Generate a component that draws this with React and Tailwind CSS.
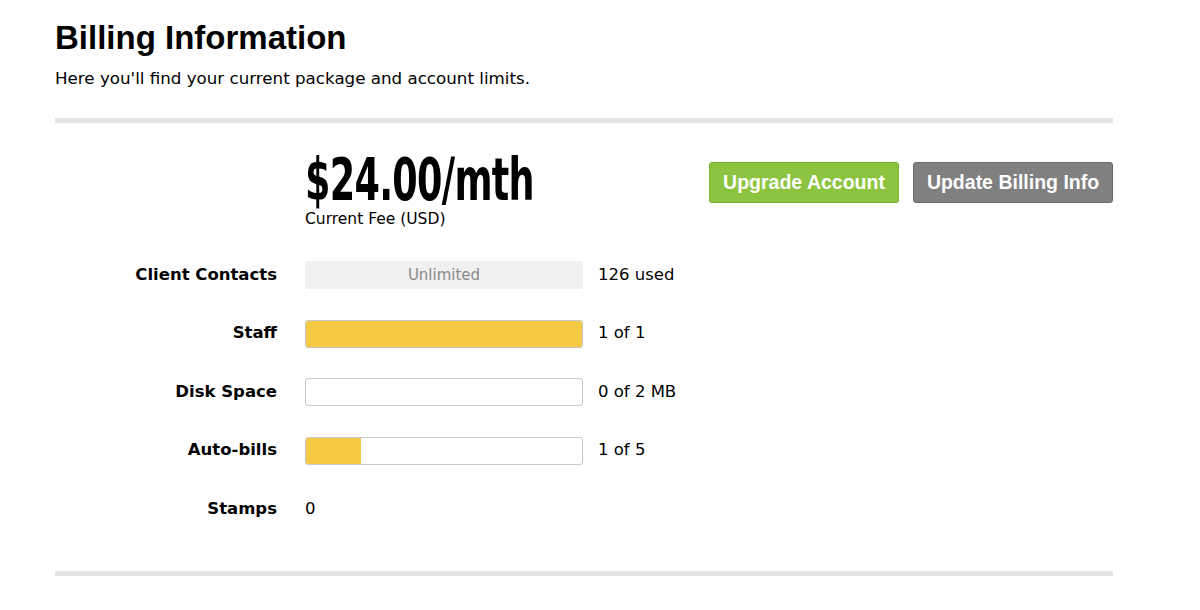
import React from 'react';

const verdana = { fontFamily: '"DejaVu Sans", Verdana, sans-serif' };

const limits = [
    { label: 'Client Contacts', kind: 'unlimited', value: '126 used' },
    { label: 'Staff', kind: 'bar', used: 1, max: 1, value: '1 of 1' },
    { label: 'Disk Space', kind: 'bar', used: 0, max: 2, value: '0 of 2 MB' },
    { label: 'Auto-bills', kind: 'bar', used: 1, max: 5, value: '1 of 5' },
    { label: 'Stamps', kind: 'plain', value: '0' },
];

const LimitBar = ({ item }) => {
    if (item.kind === 'unlimited') {
        return (
            <div className="w-[278px] h-[28px] rounded-[3px] bg-[#f0f0f0] flex items-center justify-center text-[15px] text-[#8a8a8a]">
                Unlimited
            </div>
        );
    }
    const pct = (item.used / item.max) * 100;
    return (
        <div className="w-[278px] h-[28px] rounded-[3px] border border-[#c8c8c8] bg-white overflow-hidden">
            <div className="h-full bg-[#f6c944]" style={{ width: `${pct}%` }} />
        </div>
    );
};

export default function App() {
    return (
        <div className="bg-white min-h-[610px] text-black" style={verdana}>
            <div className="ml-[55px] w-[1058px] pt-[17px]">
                <h1 className="text-[33px] font-bold leading-[42px]" style={{ fontFamily: '"Liberation Sans", Arial, sans-serif' }}>
                    Billing Information
                </h1>
                <p className="text-[16.7px] mt-[7px] leading-[24px]">Here you'll find your current package and account limits.</p>
                <div className="h-[5px] bg-[#e4e4e4] mt-[28px]" />

                <div className="flex items-start mt-[29px]">
                    <div className="w-[250px] shrink-0" />
                    <div className="flex-1 flex justify-between">
                        <div>
                            <div className="h-[58px] w-[230px] pt-[3px]">
                                <div
                                    className="inline-block align-top text-[58px] leading-[50px] font-bold tracking-[-1px] scale-x-[0.7] origin-left whitespace-nowrap"
                                    style={{ fontFamily: '"DejaVu Sans Condensed", "DejaVu Sans", sans-serif' }}
                                >
                                    $24.00/mth
                                </div>
                            </div>
                            <div className="text-[15.5px] leading-[18px]">Current Fee (USD)</div>
                        </div>
                        <div className="flex gap-[14px] mt-[10px]" style={{ fontFamily: '"Liberation Sans", Arial, sans-serif' }}>
                            <button className="h-[41px] w-[190px] rounded-[3px] bg-[#8cc43f] border border-[#79ad33] text-white font-bold text-[19.5px]">
                                Upgrade Account
                            </button>
                            <button className="h-[41px] w-[200px] rounded-[3px] bg-[#808080] border border-[#6b6b6b] text-white font-bold text-[19.5px]">
                                Update Billing Info
                            </button>
                        </div>
                    </div>
                </div>

                <div className="mt-[33px] flex flex-col gap-[30.5px]">
                    {limits.map(item => (
                        <div key={item.label} className="flex items-center h-[28px]">
                            <div className="w-[222px] text-right font-bold text-[16.5px]">{item.label}</div>
                            <div className="ml-[28px] flex items-center">
                                {item.kind !== 'plain' && <LimitBar item={item} />}
                                <div className={item.kind === 'plain' ? 'text-[16.5px]' : 'text-[16.5px] ml-[15px]'}>{item.value}</div>
                            </div>
                        </div>
                    ))}
                </div>

                <div className="h-[5px] bg-[#e4e4e4] mt-[48px]" />
            </div>
        </div>
    );
}
